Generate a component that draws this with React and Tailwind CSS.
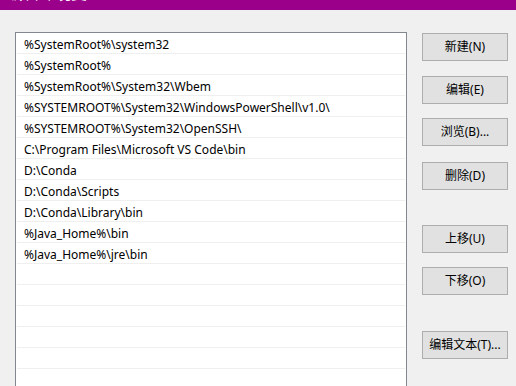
import React from "react";

const paths = [
  "%SystemRoot%\\system32",
  "%SystemRoot%",
  "%SystemRoot%\\System32\\Wbem",
  "%SYSTEMROOT%\\System32\\WindowsPowerShell\\v1.0\\",
  "%SYSTEMROOT%\\System32\\OpenSSH\\",
  "C:\\Program Files\\Microsoft VS Code\\bin",
  "D:\\Conda",
  "D:\\Conda\\Scripts",
  "D:\\Conda\\Library\\bin",
  "%Java_Home%\\bin",
  "%Java_Home%\\jre\\bin",
  "",
  "",
  "",
  "",
  "",
];

function DialogButton({ label, className = "" }) {
  return (
    <button
      className={`h-[28px] w-[86px] border border-[#adadad] bg-[#e1e1e1] text-[12px] text-black ${className}`}
    >
      {label}
    </button>
  );
}

export default function App() {
  return (
    <div
      className="h-[386px] w-[516px] overflow-hidden bg-[#f0f0f0]"
      style={{ fontFamily: '"Noto Sans", "Noto Sans CJK SC", sans-serif' }}
    >
      {/* title bar, mostly cut off */}
      <div className="h-[10px] overflow-hidden bg-[#9a008a] pl-[7px]">
        <div className="-mt-[19px] text-[16px] leading-[24px] text-white">编辑环境变量</div>
      </div>

      <div className="flex pl-[15px] pt-[22px]">
        {/* path list */}
        <div className="h-[400px] w-[392px] border border-[#828790] bg-white px-[1px]">
          {paths.map((p, i) => (
            <div
              key={i}
              className="h-[21px] border-b border-[#efefef] pl-[7px] pt-[2px] text-[12px] leading-[19px] text-black"
            >
              {p}
            </div>
          ))}
        </div>

        {/* buttons */}
        <div className="ml-[15px] flex flex-col pt-[1px]">
          <DialogButton label="新建(N)" />
          <DialogButton label="编辑(E)" className="mt-[15px]" />
          <DialogButton label="浏览(B)..." className="mt-[14px]" />
          <DialogButton label="删除(D)" className="mt-[16px]" />
          <DialogButton label="上移(U)" className="mt-[35px]" />
          <DialogButton label="下移(O)" className="mt-[14px]" />
          <DialogButton label="编辑文本(T)..." className="mt-[36px]" />
        </div>
      </div>
    </div>
  );
}
